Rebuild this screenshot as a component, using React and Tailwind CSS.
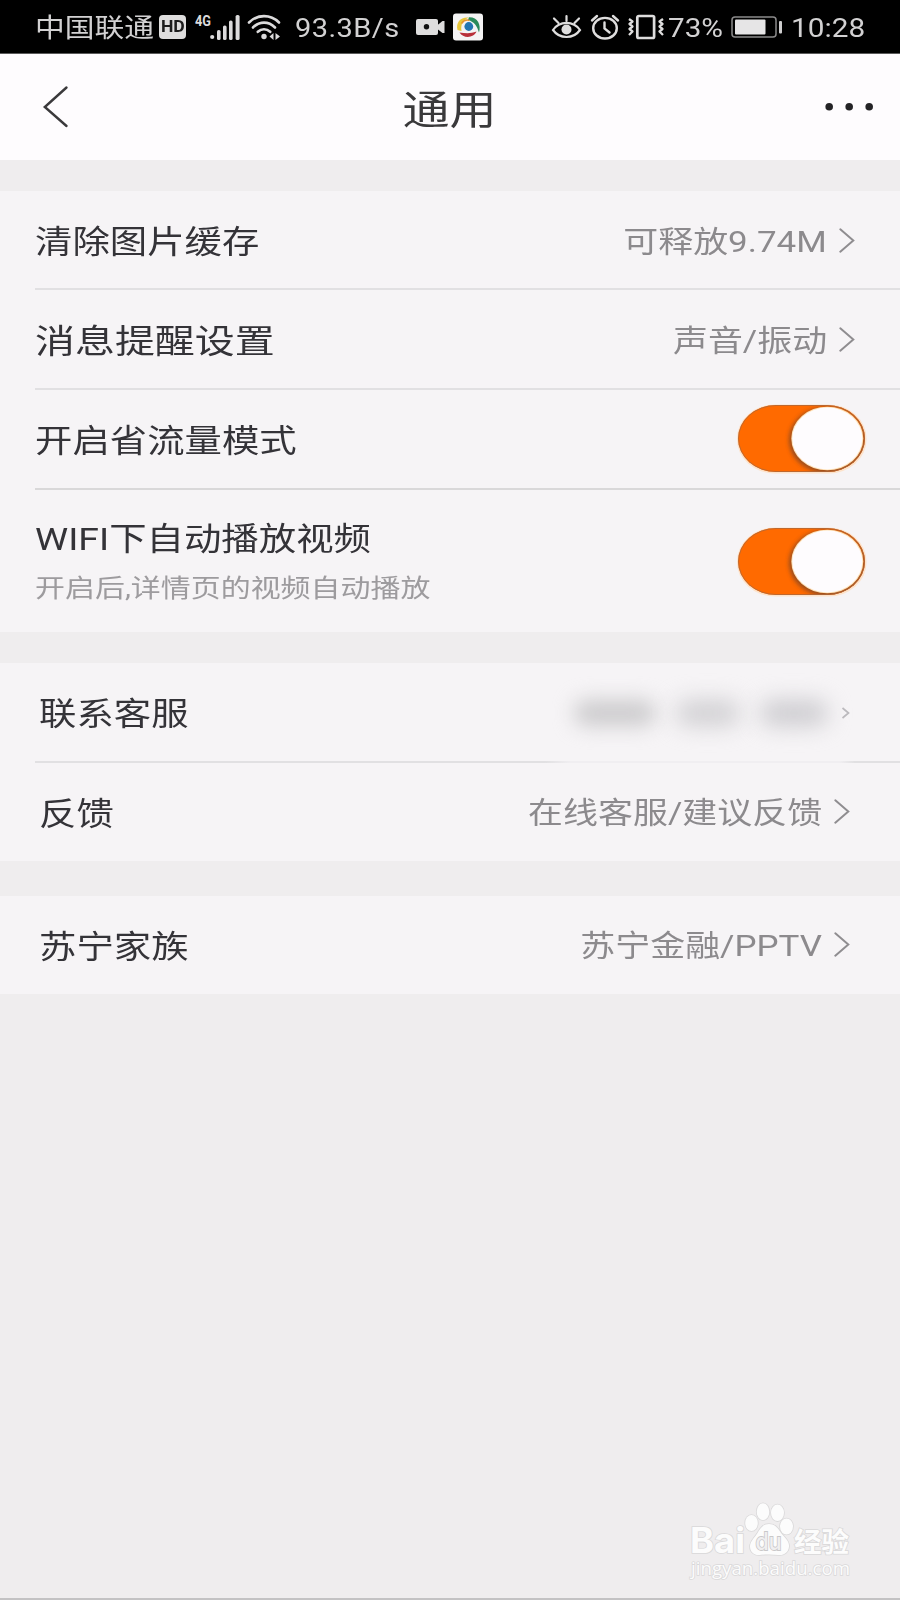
import React from "react";

const FONT = "font-['Roboto','Noto_Sans_CJK_SC',sans-serif]";

function Chevron() {
  return (
    <svg width="16" height="26" viewBox="0 0 16 26" fill="none" stroke="#8f8d90" strokeWidth="2" strokeLinecap="round">
      <path d="M1.300 1.300 14.300 12.500 1.300 23.700" />
    </svg>
  );
}

function Value({ children, inset }) {
  return (
    <div className={"flex items-center gap-[12px] " + (inset ? "pr-[50px]" : "pr-[45px]")}>
      <span className="inline-block origin-right scale-x-[1.185] whitespace-nowrap pt-[4px] text-[29.5px] leading-none text-[#8c8a8d]">
        {children}
      </span>
      <Chevron />
    </div>
  );
}

function Label({ children }) {
  return (
    <span className="inline-block origin-left scale-x-[1.187] whitespace-nowrap pt-[5px] text-[31.5px] leading-none text-[#343338]">
      {children}
    </span>
  );
}

function Toggle({ raised }) {
  return (
    <svg className={"mr-[33px] " + (raised ? "mb-[2px]" : "")} width="131" height="71" viewBox="0 0 131 71">
      <defs>
        <filter id="knob" x="-20%" y="-20%" width="140%" height="140%">
          <feGaussianBlur stdDeviation="2" />
        </filter>
        <clipPath id="track">
          <rect x="2" y="2" width="127" height="67" rx="38" ry="33.5" />
        </clipPath>
      </defs>
      <rect x="1" y="1.5" width="129.500" height="69" rx="38" ry="34" fill="#ffdfc0" opacity=".8" />
      <rect x="2" y="2" width="127" height="67" rx="38" ry="33.5" fill="#ff6a00" />
      <g clipPath="url(#track)">
        <ellipse cx="91" cy="37" rx="38" ry="33" fill="#8c4a20" filter="url(#knob)" opacity=".9" />
      </g>
      <rect x="2.5" y="2.5" width="126" height="66" rx="37.5" ry="33" fill="none" stroke="#a8683f" strokeWidth="1" opacity=".75" />
      <ellipse cx="91.300" cy="35.500" rx="36" ry="31.800" fill="#ffe2b8" />
      <ellipse cx="91.300" cy="35.500" rx="35" ry="30.900" fill="#fefcfe" />
    </svg>
  );
}

function StatusBar() {
  const text = "inline-block origin-left whitespace-nowrap pt-[3px] leading-none text-[#d2d1d2]";
  return (
    <div className="flex h-[54px] shrink-0 items-center border-b border-[#5a5a5a] bg-black pl-[35px] pt-[2px]">
      <div className="w-[124px]">
        <span className={text + " scale-x-[1.145] text-[26px]"}>中国联通</span>
      </div>
      <div className="mb-[2px] flex h-[24px] w-[27px] items-center justify-center rounded-[4px] bg-[#dedddd]">
        <span className="inline-block scale-x-[1.1] text-[16px] font-bold leading-none text-[#1c1c1c]">HD</span>
      </div>
      <svg className="mb-[2px] ml-[8px]" width="48" height="28" viewBox="0 0 48 28" fill="#dcdbdc">
        <text x="1" y="13" fontFamily="Roboto" fontWeight="700" fontSize="14.5" textLength="16" lengthAdjust="spacingAndGlyphs">4G</text>
        <circle cx="18.2" cy="24" r="2.1" />
        <rect x="23" y="17" width="3.6" height="10" rx="1.6" />
        <rect x="29" y="12.5" width="3.6" height="14.5" rx="1.6" />
        <rect x="35" y="7.5" width="3.6" height="19.5" rx="1.6" />
        <rect x="41.6" y="2" width="4" height="25" rx="1.6" />
      </svg>
      <svg className="mb-[2px] ml-[5px]" width="35" height="28" viewBox="0 0 35 28" fill="none" stroke="#dcdbdc" strokeWidth="2.6" strokeLinecap="round">
        <path d="M2 9.500C10.500 1 23.500 1 32 9.500M6 14.500C12.500 8 21.500 8 28 14.500M10.800 18.800C14.500 15.500 19.500 15.500 23.200 18.800" />
        <circle cx="17" cy="23.500" r="2.700" fill="#dcdbdc" stroke="none" />
        <path d="M26.500 20v7l-4-3.500zM28.500 20v7l4.500-3.500z" fill="#dcdbdc" stroke="none" />
      </svg>
      <div className="ml-[13px] w-[121px]">
        <span className={text + " scale-x-[1.115] text-[26px] tracking-[0.4px]"}>93.3B/s</span>
      </div>
      <svg className="mb-[1px]" width="29" height="18" viewBox="0 0 29 18" fill="#dedddd">
        <rect x="0" y="1" width="22" height="16" rx="2" />
        <path d="M21 7.500 26.500 3h2v12h-2L21 10.800z" />
        <circle cx="10.500" cy="8.800" r="2.700" fill="#111" />
      </svg>
      <svg className="mb-[2px] ml-[8px]" width="30" height="28" viewBox="0 0 30 28" fill="none">
        <rect width="30" height="27" y=".5" rx="3" fill="#f4f3f4" />
        <path d="M4.500 17C2.500 9 8 3.500 16 4.500 10 7 7.500 11 8.500 18z" fill="#e6c53a" />
        <path d="M16 4.300C24.500 4 28.500 12 26 19.500 24 13 21.500 9 15 7z" fill="#2a8a5a" />
        <path d="M23.500 18.500C21 25 10.500 26 6.500 19.500 12 20 17 21 23.500 18.500z" fill="#b8303a" />
        <path d="M8.500 10.500c2.500-3.500 5-4 8-3" stroke="#e8952e" strokeWidth="1.500" />
        <circle cx="15.800" cy="13.500" r="4.400" fill="#2275b0" />
      </svg>
      <svg className="mb-[2px] ml-[68px]" width="31" height="26" viewBox="0 0 31 26" fill="none" stroke="#dedddd" strokeWidth="2.200" strokeLinecap="round">
        <path d="M2 16C8.500 6.500 22.500 6.500 29 16 22.500 25.300 8.500 25.300 2 16z" />
        <path d="M15.500 7V2M7.500 9 3 4.500M23.500 9 28 4.500" />
        <circle cx="15.500" cy="15.500" r="5" fill="#dedddd" stroke="none" />
      </svg>
      <svg className="mb-[2px] ml-[8px]" width="30" height="26" viewBox="0 0 30 26" fill="none" stroke="#dedddd" strokeWidth="2.400" strokeLinecap="round">
        <ellipse cx="15" cy="14.200" rx="11.800" ry="10.300" />
        <path d="M2 6.500 7 2M28 6.500 23 2M14.500 8.500v6l5 4" />
      </svg>
      <svg className="mb-[2px] ml-[7px]" width="38" height="26" viewBox="0 0 38 26" fill="none" stroke="#dedddd" strokeWidth="2.200" strokeLinejoin="round">
        <rect x="10.300" y="2" width="16.800" height="22" rx="1.500" strokeWidth="2.700" />
        <path d="M2 5l3.500 2.500L2.500 10 5.500 12.500 2.500 15 5.500 17.500 2 21M36 5l-3.500 2.500 3 2.500-3 2.500 3 2.500-3 2.500L36 21" strokeWidth="2.300" />
      </svg>
      <div className="ml-[3px] w-[63px]">
        <span className={text + " scale-x-[1.14] text-[26px]"}>73%</span>
      </div>
      <svg className="mb-[2px]" width="52" height="22" viewBox="0 0 52 22" fill="none">
        <rect x="1" y="1" width="44" height="20" rx="3" stroke="#8b8a8b" strokeWidth="1.500" />
        <rect x="4" y="3.500" width="30.500" height="15" rx="1" fill="#e6e5e6" />
        <rect x="48" y="5" width="3" height="12.500" rx="1" fill="#cfcecf" />
      </svg>
      <div className="ml-[8px] w-[75px]">
        <span className={text + " scale-x-[1.145] text-[26px]"}>10:28</span>
      </div>
    </div>
  );
}

function Header() {
  return (
    <div className="flex h-[106px] shrink-0 items-center bg-[#fefcfe]">
      <svg className="ml-[42px]" width="28" height="44" viewBox="0 0 28 44" fill="none" stroke="#3a393b" strokeWidth="2.400" strokeLinecap="round">
        <path d="M24.500 2.500 2.800 22 24.500 41" />
      </svg>
      <div className="flex flex-1 justify-center pl-[4px]">
        <span className="inline-block scale-x-[1.19] pt-[7px] text-[39.5px] leading-none text-[#3a393b]">通用</span>
      </div>
      <svg className="mr-[25px]" width="50" height="10" viewBox="0 0 50 10" fill="#242326">
        <circle cx="4.200" cy="4.700" r="3.800" />
        <circle cx="24.200" cy="4.700" r="3.800" />
        <circle cx="44.200" cy="4.700" r="3.800" />
      </svg>
    </div>
  );
}

function Divider({ dark }) {
  return <div className={"ml-[35px] h-[2px] shrink-0 " + (dark ? "bg-[#d9d8d9]" : "bg-[#e1e0e2]")} />;
}

function Watermark() {
  return (
    <svg className="absolute right-[46px] bottom-[12px]" width="168" height="90" viewBox="0 0 168 90" fill="#fcfcfc" stroke="#d9d8d9" strokeWidth="1.600" paintOrder="stroke">
      <text x="4" y="57" fontSize="35" fontFamily="Inter, 'Liberation Sans', sans-serif" fontWeight="700" textLength="55" lengthAdjust="spacingAndGlyphs">Bai</text>
      <ellipse cx="65.500" cy="27" rx="6.300" ry="8" />
      <ellipse cx="77" cy="15.800" rx="6.300" ry="8.500" />
      <ellipse cx="91.500" cy="16.800" rx="6.500" ry="8.300" />
      <ellipse cx="100.500" cy="30.500" rx="6.500" ry="8" />
      <path d="M83 28c6 0 9 4 12 9 4 5 8.500 8 8 13.500-.5 6-5 9-10.500 8.500-6-.8-13-.8-19 0-5 .5-9.500-3-9.500-8.500 0-5 4-8 7.500-13.500 3-5 5.500-9 11.500-9z" />
      <text x="69.500" y="53.500" fontSize="24" fontFamily="Inter, sans-serif" fontWeight="500" fill="#f0eff0" stroke="#c9c8c9" strokeWidth="1.800" textLength="26" lengthAdjust="spacingAndGlyphs">du</text>
      <text x="108" y="55.500" fontSize="27" fontFamily="'Noto Sans CJK SC', sans-serif" fontWeight="700" textLength="55" lengthAdjust="spacingAndGlyphs">经验</text>
      <text x="5" y="79" fontSize="19" fontFamily="'Open Sans', sans-serif" textLength="159" lengthAdjust="spacingAndGlyphs">jingyan.baidu.com</text>
    </svg>
  );
}

export default function App() {
  return (
    <div className={"relative flex h-[1600px] w-[900px] flex-col overflow-hidden border-b-2 border-[#c3c2c3] bg-[#efedee] " + FONT}>
      <StatusBar />
      <Header />

      <section className="mt-[31px] flex h-[441px] shrink-0 flex-col bg-[#f6f4f6]">
        <div className="flex h-[97px] items-center justify-between pl-[35px] pt-[2px]">
          <Label>清除图片缓存</Label>
          <Value>可释放9.74M</Value>
        </div>
        <Divider />
        <div className="flex h-[98px] items-center justify-between pl-[35px] pt-[1px]">
          <span className="inline-block origin-left scale-x-[1.2] whitespace-nowrap pt-[5px] text-[33.3px] leading-none text-[#343338]">消息提醒设置</span>
          <Value>声音/振动</Value>
        </div>
        <Divider />
        <div className="flex h-[98px] items-center justify-between pl-[35px]">
          <Label>开启省流量模式</Label>
          <Toggle raised />
        </div>
        <Divider dark />
        <div className="flex h-[142px] items-center justify-between pl-[35px]">
          <div className="mb-[2px] flex flex-col gap-[21px]">
            <Label>WIFI下自动播放视频</Label>
            <span className="inline-block origin-left scale-x-[1.175] whitespace-nowrap text-[25.5px] leading-none text-[#9d9b9e]">
              开启后,详情页的视频自动播放
            </span>
          </div>
          <Toggle />
        </div>
      </section>

      <section className="mt-[31px] flex h-[198px] shrink-0 flex-col bg-[#f6f4f6]">
        <div className="flex h-[98px] items-center justify-between pl-[39px] pt-[1px]">
          <Label>联系客服</Label>
          <div className="flex items-center pr-[50px]">
            <div className="h-[26px] w-[82px] rounded-full bg-[#cccbcd] blur-[10px]" />
            <div className="ml-[20px] h-[26px] w-[64px] rounded-full bg-[#d1d0d3] blur-[11px]" />
            <div className="ml-[20px] h-[26px] w-[68px] rounded-full bg-[#cdccd0] blur-[11px]" />
            <svg className="ml-[13px]" width="9" height="12" viewBox="0 0 9 12" fill="none" stroke="#bbb9bd" strokeWidth="1.700">
              <path d="M1.500 1 7.500 6 1.500 11" />
            </svg>
          </div>
        </div>
        <div className="ml-[35px] flex h-[2px] shrink-0">
          <div className="w-[510px] bg-[#e1e0e2]" />
          <div className="w-[25px] bg-linear-to-r from-[#e1e0e2] to-[#f0eef1]" />
          <div className="w-[270px] bg-[#f0eef1]" />
          <div className="w-[15px] bg-linear-to-r from-[#f0eef1] to-[#e1e0e2]" />
          <div className="flex-1 bg-[#e1e0e2]" />
        </div>
        <div className="flex h-[98px] items-center justify-between pl-[39px]">
          <Label>反馈</Label>
          <Value inset>在线客服/建议反馈</Value>
        </div>
      </section>

      <section className="mt-[35px] flex h-[98px] shrink-0 items-center justify-between bg-[#f6f4f6] pl-[39px]">
        <Label>苏宁家族</Label>
        <Value inset>苏宁金融/PPTV</Value>
      </section>

      <Watermark />
    </div>
  );
}
